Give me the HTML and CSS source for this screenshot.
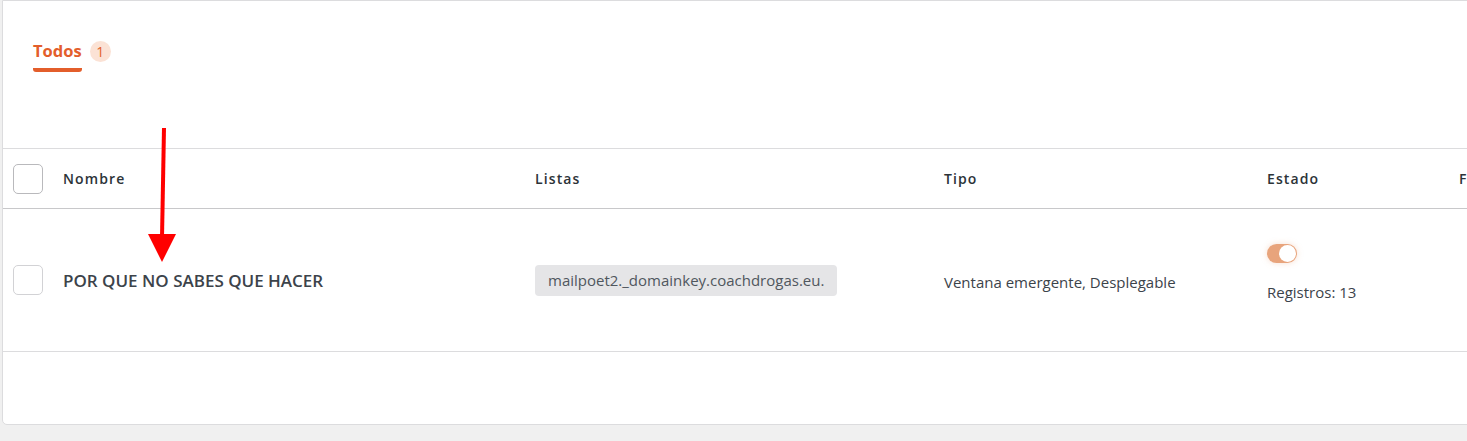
FILE: index.html
```html
<!DOCTYPE html>
<html lang="es">
<head>
    <meta charset="UTF-8">
    <title>Formularios</title>
    <link rel="stylesheet" href="styles.css">
</head>
<body>
    <div class="card">
        <div class="tabs">
            <div class="tab active">
                <span class="tab-label">Todos</span>
                <span class="tab-count">1</span>
            </div>
        </div>

        <div class="table">
            <div class="row head">
                <div class="cell check"><span class="box"></span></div>
                <div class="cell">Nombre</div>
                <div class="cell">Listas</div>
                <div class="cell">Tipo</div>
                <div class="cell">Estado</div>
                <div class="cell">Fecha</div>
            </div>
            <div class="row item">
                <div class="cell check"><span class="box light"></span></div>
                <div class="cell name">POR QUE NO SABES QUE HACER</div>
                <div class="cell"><span class="tag">mailpoet2._domainkey.coachdrogas.eu.</span></div>
                <div class="cell type">Ventana emergente, Desplegable</div>
                <div class="cell status">
                    <span class="toggle"><span class="knob"></span></span>
                    <span class="count">Registros: 13</span>
                </div>
                <div class="cell"></div>
            </div>
        </div>

        <svg class="arrow" width="40" height="140" viewBox="0 0 40 140">
            <line x1="22" y1="0" x2="20" y2="110" stroke="#ff0000" stroke-width="4"/>
            <polygon points="6,106 34,106 20,134" fill="#ff0000"/>
        </svg>
    </div>
</body>
</html>
```

FILE: styles.css
```css
body {
    margin: 0;
    background-color: #f0f0f0;
    font-family: "Open Sans", "Noto Sans", sans-serif;
    color: #3c434a;
    overflow: hidden;
    height: 441px;
}
.card {
    position: relative;
    margin-left: 2px;
    width: 1520px;
    height: 425px;
    box-sizing: border-box;
    background-color: #fff;
    border: 1px solid #dcdcde;
    border-radius: 0 0 0 5px;
}
.tabs {
    height: 147px;
    padding-left: 30px;
    box-sizing: border-box;
    padding-top: 38px;
}
.tab {
    display: inline-flex;
    align-items: flex-start;
    gap: 8px;
}
.tab-label {
    color: #e35e2b;
    font-weight: 700;
    font-size: 16.5px;
    line-height: 24px;
    padding-bottom: 5px;
    border-bottom: 4px solid #e35e2b;
    border-radius: 0 0 3px 3px;
}
.tab-count {
    width: 21px;
    height: 21px;
    margin-top: 2px;
    border-radius: 50%;
    background-color: #fbe2d5;
    color: #e35e2b;
    font-size: 14px;
    display: flex;
    align-items: center;
    justify-content: center;
}
.table {
    border-top: 1px solid #dcdcde;
}
.row {
    display: grid;
    grid-template-columns: 60px 472px 409px 323px 192px 1fr;
    align-items: center;
    border-bottom: 1px solid #c8c8ca;
}
.head {
    height: 59px;
    font-size: 14px;
    font-weight: 600;
    letter-spacing: 1.1px;
    color: #2c3338;
}
.item {
    height: 142px;
    border-bottom-color: #dcdcde;
}
.check {
    padding-left: 10px;
}
.box {
    display: block;
    width: 28px;
    height: 28px;
    border: 1px solid #b9b9bc;
    border-radius: 5px;
}
.box.light {
    border-color: #d2d2d5;
}
.name {
    font-size: 17px;
    font-weight: 600;
    color: #3c434a;
}
.tag {
    display: inline-block;
    background-color: #e5e5e7;
    border-radius: 4px;
    padding: 5px 13px 6px;
    font-size: 15px;
    color: #50575e;
}
.type {
    font-size: 15px;
    color: #3c434a;
    padding-top: 3px;
}
.status {
    align-self: start;
    display: flex;
    flex-direction: column;
    align-items: flex-start;
    gap: 19px;
    padding-top: 35px;
}
.toggle {
    width: 30px;
    height: 19px;
    border-radius: 10px;
    background-color: #e8a47c;
    box-shadow: 0 0 6px rgba(232, 164, 124, 0.35);
    display: flex;
    justify-content: flex-end;
    align-items: center;
    padding: 0 1px;
    box-sizing: border-box;
}
.knob {
    width: 17px;
    height: 17px;
    border-radius: 50%;
    background-color: #fff;
}
.count {
    font-size: 15px;
    color: #3c434a;
}
.arrow {
    position: absolute;
    left: 139px;
    top: 127px;
}
```
